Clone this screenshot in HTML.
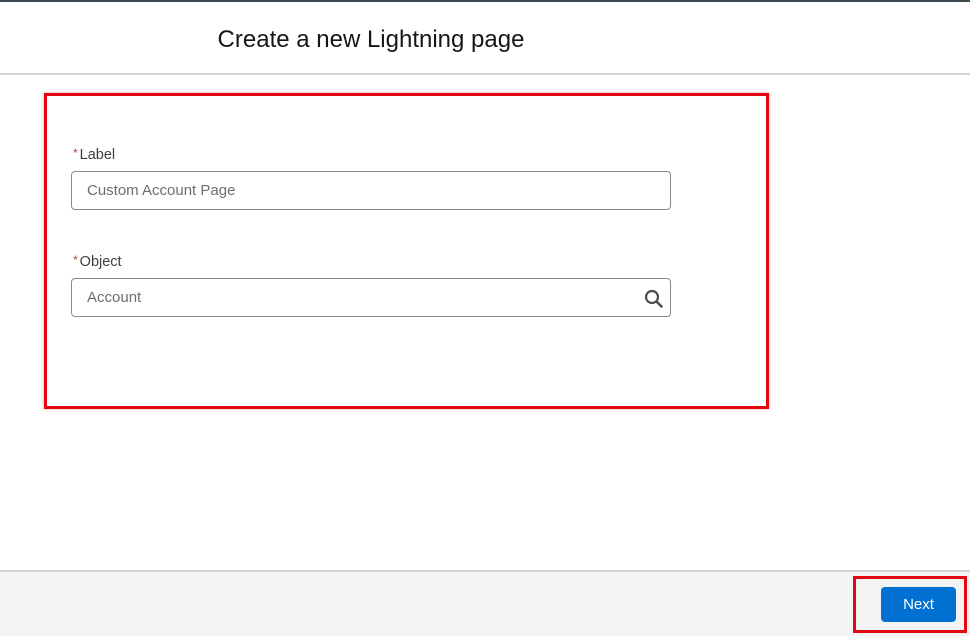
<!DOCTYPE html>
<html><head><style>
body{margin:0;width:970px;height:634px;position:relative;background:#fff;font-family:"Liberation Sans",sans-serif;overflow:hidden}
.a{position:absolute}
.lbl{font-size:14.5px;color:#3e3e3c}
.lbl b{color:#c23934;font-weight:normal;font-size:12px;margin-right:2px;vertical-align:2px}
.inp{position:absolute;left:71px;width:600px;height:39px;border:1px solid #8a8a8a;border-radius:4px;box-sizing:border-box;font-size:15px;color:#706e6b;line-height:38px;padding-left:15px}
</style></head><body>
<div class="a" style="left:0;top:0;width:970px;height:2px;background:#3e4a52"></div>
<div class="a" style="left:0;top:26px;width:742px;text-align:center;font-size:24px;color:#16161a">Create a new Lightning page</div>
<div class="a" style="left:0;top:73px;width:970px;height:2px;background:#d4d4d4"></div>
<div class="a" style="left:44px;top:93px;width:719px;height:310px;border:3px solid #e3080f;box-shadow:0 0 3px rgba(200,0,0,.4)"></div>
<div class="a lbl" style="left:73px;top:146px"><b>*</b>Label</div>
<div class="inp" style="top:171px">Custom Account Page</div>
<div class="a lbl" style="left:73px;top:253px"><b>*</b>Object</div>
<div class="inp" style="top:278px">Account
<svg style="position:absolute;right:6px;top:10px" width="20" height="20" viewBox="0 0 20 20"><circle cx="8" cy="8" r="6" fill="none" stroke="#514f4d" stroke-width="2.2"/><path d="M12.5 12.5L17.5 17.5" stroke="#514f4d" stroke-width="2.6" stroke-linecap="round"/></svg></div>
<div class="a" style="left:0;top:570px;width:970px;height:64px;background:#f3f3f3;border-top:2px solid #d4d4d4"></div>
<div class="a" style="left:853px;top:576px;width:108px;height:51px;border:3px solid #e3080f"></div>
<div class="a" style="left:881px;top:587px;width:75px;height:35px;background:#0070d2;border-radius:4px;color:#fff;font-size:15px;line-height:35px;text-align:center">Next</div>
</body></html>
